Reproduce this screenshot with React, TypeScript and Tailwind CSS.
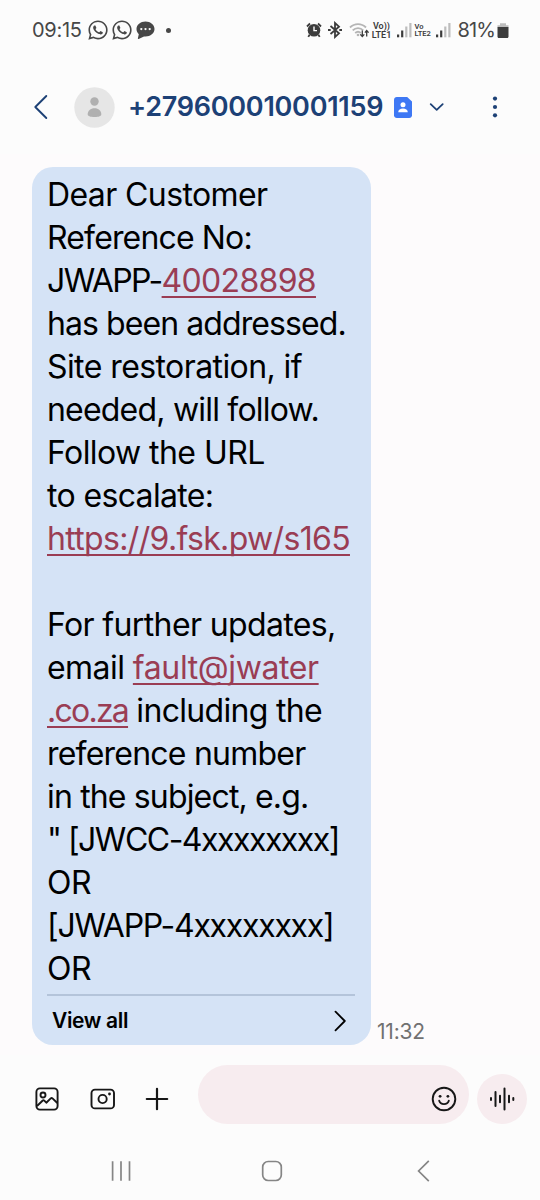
import { FaWhatsapp } from "react-icons/fa";

type Part = { text: string; link?: boolean; track: string };

const message: Part[][] = [
  [{ text: "Dear Customer", track: "tracking-[-0.6px]" }],
  [{ text: "Reference No:", track: "tracking-[-0.85px]" }],
  [
    { text: "JWAPP-", track: "tracking-[-1.6px]" },
    { text: "40028898", link: true, track: "tracking-[-0.68px]" },
  ],
  [{ text: "has been addressed.", track: "tracking-[-0.92px]" }],
  [{ text: "Site restoration, if", track: "tracking-[-0.58px]" }],
  [{ text: "needed, will follow.", track: "tracking-[-0.8px]" }],
  [{ text: "Follow the URL", track: "tracking-[-0.57px]" }],
  [{ text: "to escalate:", track: "tracking-[-0.65px]" }],
  [{ text: "https://9.fsk.pw/s165", link: true, track: "tracking-[-0.66px]" }],
  [],
  [{ text: "For further updates,", track: "tracking-[-0.63px]" }],
  [
    { text: "email ", track: "tracking-[-0.55px]" },
    { text: "fault@jwater", link: true, track: "tracking-[-0.4px]" },
  ],
  [
    { text: ".co.za", link: true, track: "tracking-[-1.75px]" },
    { text: " including the", track: "tracking-[-0.68px]" },
  ],
  [{ text: "reference number", track: "tracking-[-0.78px]" }],
  [{ text: "in the subject, e.g.", track: "tracking-[-0.84px]" }],
  [{ text: '" [JWCC-4xxxxxxxx]', track: "tracking-[-1.5px]" }],
  [{ text: "OR", track: "tracking-[-0.5px]" }],
  [{ text: "[JWAPP-4xxxxxxxx]", track: "tracking-[-1.27px]" }],
  [{ text: "OR", track: "tracking-[-0.5px]" }],
];

function Signal() {
  return (
    <svg width="15" height="16" viewBox="0 0 15 16">
      <rect x="0" y="12.5" width="2.2" height="2.8" fill="#3c3c3c" />
      <rect x="4.1" y="8.5" width="2.2" height="6.8" fill="#3c3c3c" />
      <rect x="8.2" y="4.5" width="2.2" height="10.8" fill="#bdbdbd" />
      <rect x="12.3" y="1" width="2.2" height="14.3" fill="#bdbdbd" />
    </svg>
  );
}

function StatusBar() {
  return (
    <div className="flex h-[60px] items-center pr-[31px] pl-[32px] text-[20px] text-[#474747]">
      <span className="w-[54.5px] tracking-[-0.3px]">09:15</span>
      <FaWhatsapp size={22} className="mr-[2px]" />
      <FaWhatsapp size={22} className="mr-[2px]" />
      <svg width="19" height="20" viewBox="0 0 19 20" className="ml-px">
        <path d="M9.5 1.6c5 0 9 3.3 9 7.5s-4 7.5-9 7.5c-.5 0-1 0-1.500-.1L2.600 19c-.5.2-.9-.2-.7-.7l.9-4C1.300 12.900.5 11.100.5 9.100c0-4.200 4-7.500 9-7.500z" fill="currentColor" />
        <g fill="#fcfcfc">
          <circle cx="5.3" cy="9.1" r="1.15" />
          <circle cx="9.5" cy="9.1" r="1.15" />
          <circle cx="13.7" cy="9.1" r="1.15" />
        </g>
      </svg>
      <span className="ml-[11px] size-[5px] rounded-full bg-[#474747]" />
      <div className="ml-auto flex items-center">
        <svg width="16" height="16" viewBox="0 0 16 16">
          <circle cx="8" cy="8.3" r="6.3" fill="#3c3c3c" />
          <path d="M1 4.500 4 1.500M15 4.500 12 1.500M3.600 12.800 2.300 14.900M12.400 12.800l1.300 2.100" stroke="#3c3c3c" strokeWidth="1.8" fill="none" />
          <path d="M8 4.600v4h3" stroke="#fcfcfc" strokeWidth="1.4" fill="none" />
        </svg>
        <svg width="16" height="18" viewBox="0 0 16 18" className="ml-[5px]" fill="none" stroke="#3c3c3c" strokeWidth="1.8">
          <path d="M3.500 5 12 12.300 8 16V2l4 3.700L3.500 13" />
          <path d="M1 9h2.700M12.300 9H15" strokeWidth="2.2" />
        </svg>
        <svg width="21" height="18" viewBox="0 0 21 18" className="ml-[6px]" fill="none">
          <g stroke="#b5b5b5" strokeWidth="1.8">
            <path d="M1 6.500c4.500-4.600 11.500-4.600 16 0" />
            <path d="M3.700 9.400c3-3 7.600-3 10.600 0" />
            <path d="M6.200 12c1.600-1.500 4-1.500 5.600 0" />
          </g>
          <circle cx="9" cy="14" r="1.3" fill="#b5b5b5" />
          <path d="M13.300 9.500v6M11.300 13.400l2 2.100 2-2.100M17.700 15.500v-6M15.900 11.600l1.800-2.100 1.900 2.100" stroke="#3c3c3c" strokeWidth="1.3" />
        </svg>
        <div className="ml-[2px] flex w-[20px] flex-col items-center pt-px font-['Roboto',sans-serif] text-[9px] leading-[9px] font-semibold whitespace-nowrap text-[#3c3c3c]">
          <span>Vo))</span>
          <span>LTE1</span>
        </div>
        <div className="ml-[5px]"><Signal /></div>
        <div className="ml-[3px] flex w-[17px] flex-col font-['Roboto',sans-serif] text-[7.5px] leading-[7.5px] font-semibold whitespace-nowrap text-[#3c3c3c]">
          <span>Vo</span>
          <span>LTE2</span>
        </div>
        <div className="ml-[4px]"><Signal /></div>
        <span className="ml-[7px] w-[39.5px] tracking-[-0.9px] whitespace-nowrap">81%</span>
        <svg width="12" height="17" viewBox="0 0 12 17">
          <path d="M3 1.200h6v2h2.500v2H.5v-2H3z" fill="#bdbdbd" />
          <path d="M.5 5h11v9.500c0 .8-.5 1.500-1.300 1.500H1.800C1 16 .5 15.300.5 14.500z" fill="#3c3c3c" />
        </svg>
      </div>
    </div>
  );
}

function Header() {
  return (
    <header className="flex h-[94px] items-center pl-[33px] text-[#1d4176]">
      <svg width="16" height="28" viewBox="0 0 16 28" fill="none" stroke="currentColor" strokeWidth="1.9" strokeLinecap="round" strokeLinejoin="round">
        <path d="M13.300 3 2.300 14l11 11" />
      </svg>
      <svg width="41" height="41" viewBox="0 0 41 41" className="ml-[25px]">
        <circle cx="20.5" cy="20.5" r="20.2" fill="#e6e6e6" />
        <circle cx="20.5" cy="14.5" r="4.2" fill="#b0b0b0" />
        <path d="M13.700 27.200c0-3.400 2.800-6 6.800-6s6.800 2.600 6.800 6c0 1.800-2.600 2.800-6.800 2.800s-6.800-1-6.800-2.800z" fill="#b0b0b0" />
      </svg>
      <h1 className="ml-[13px] w-[265.5px] text-[27px] font-semibold tracking-[-0.27px] whitespace-nowrap">+279600010001159</h1>
      <svg width="18" height="21" viewBox="0 0 18 21">
        <path d="M2.800 0h10.400L18 4.600v13.600c0 1.600-1.200 2.800-2.800 2.800H2.800C1.200 21 0 19.800 0 18.200V2.800C0 1.200 1.200 0 2.800 0z" fill="#3e78f4" />
        <circle cx="9" cy="7.8" r="2.5" fill="#fff" />
        <path d="M4.300 14.800c0-2 2-3.300 4.700-3.300s4.700 1.300 4.700 3.300v.5H4.300z" fill="#fff" />
      </svg>
      <svg width="16" height="12" viewBox="0 0 16 12" className="ml-[16px]" fill="none" stroke="currentColor" strokeWidth="1.8" strokeLinecap="round" strokeLinejoin="round">
        <path d="m2.700 3.200 6 5.700 6-5.700" />
      </svg>
      <svg width="6" height="22" viewBox="0 0 6 22" className="ml-[48px]" fill="currentColor">
        <circle cx="3" cy="2.6" r="2.1" />
        <circle cx="3" cy="11" r="2.1" />
        <circle cx="3" cy="19.3" r="2.1" />
      </svg>
    </header>
  );
}

function Conversation() {
  return (
    <main className="flex h-[901px] items-start bg-[#fdfbfc] pt-[13px] pl-[32px]">
      <div className="h-[878px] w-[339px] rounded-[21px] bg-[#d5e3f6] pt-[6px] pr-[16px] pl-[15px] text-black">
        <div className="text-[32px] leading-[43px]">
          {message.map((line, i) => (
            <div key={i} className="h-[43px] whitespace-pre">
              {line.map((part) => (
                <span
                  key={part.text}
                  className={`${part.track} ${part.link ? "text-[#9a3d54] underline decoration-2 underline-offset-[4px] [text-decoration-skip-ink:none]" : ""}`}
                >
                  {part.text}
                </span>
              ))}
            </div>
          ))}
        </div>
        <div className="mt-[4px] h-[2px] bg-[#b4c4da]" />
        <div className="flex h-[49px] items-center justify-between pr-[7px] pl-[5px]">
          <span className="text-[21px] font-semibold tracking-[-0.35px]">View all</span>
          <svg width="15" height="24" viewBox="0 0 15 24" fill="none" stroke="#000" strokeWidth="1.8" strokeLinecap="round" strokeLinejoin="round">
            <path d="m2.500 2.700 9.300 9.300-9.300 9.300" />
          </svg>
        </div>
      </div>
      <time className="mt-[852px] ml-[6px] text-[21px] leading-[26px] tracking-[-0.2px] text-[#717171]">11:32</time>
    </main>
  );
}

function Composer() {
  return (
    <div className="flex h-[79px] pt-[10px] pl-[34px]">
      <div className="flex h-[68px] w-[163.5px] items-center text-[#171717]">
        <svg width="26" height="26" viewBox="0 0 26 26" fill="none" stroke="currentColor" strokeWidth="1.9" strokeLinejoin="round">
          <rect x="2.4" y="2.4" width="21.2" height="21.2" rx="3.5" />
          <circle cx="9" cy="9" r="2.5" />
          <path d="m3 20 5.500-5.300c.6-.6 1.200-.6 1.800 0l2 2 4.400-4.300c.6-.5 1.200-.5 1.800 0l4.800 4.600" />
        </svg>
        <svg width="28" height="24" viewBox="0 0 28 24" className="ml-[29px]" fill="none" stroke="currentColor" strokeWidth="1.9">
          <rect x="2.5" y="2.6" width="22.5" height="18.8" rx="3.5" />
          <circle cx="13.6" cy="12" r="4.1" />
          <circle cx="20.5" cy="7" r="1.4" fill="currentColor" stroke="none" />
        </svg>
        <svg width="24" height="24" viewBox="0 0 24 24" className="ml-[28px]" fill="none" stroke="currentColor" strokeWidth="2.2" strokeLinecap="round">
          <path d="M12 1.800v20.400M1.800 12h20.400" />
        </svg>
      </div>
      <div className="flex h-[59px] w-[271.5px] justify-end rounded-full bg-[#f7ecef] pt-[21px] pr-[12px]">
        <svg width="26" height="26" viewBox="0 0 26 26" fill="none" stroke="#171717" strokeWidth="1.9" strokeLinecap="round">
          <circle cx="13" cy="13" r="11.3" />
          <path d="M8.200 14.700c.7 2.200 2.500 3.400 4.800 3.400s4.100-1.200 4.800-3.400" />
          <circle cx="9.1" cy="10.3" r="1.4" fill="#171717" stroke="none" />
          <circle cx="16.9" cy="10.3" r="1.4" fill="#171717" stroke="none" />
        </svg>
      </div>
      <div className="mt-[9px] ml-[8px] flex size-[50px] items-center justify-center rounded-full bg-[#f7ecef]">
        <svg width="26" height="26" viewBox="0 0 26 26" stroke="#171717" strokeWidth="2" strokeLinecap="round">
          <path d="M2 12v2M6.500 6v14M11 9.700v6.600M15.500 2.500v21M20 9.700v6.600M24.300 12v2" />
        </svg>
      </div>
    </div>
  );
}

function NavigationBar() {
  return (
    <nav className="flex h-[66px] items-center pt-[7px] pl-[110px] text-[#858585]">
      <svg width="22" height="24" viewBox="0 0 22 24" stroke="currentColor" strokeWidth="1.7">
        <path d="M2.600 2.300v19.400M11 2.300v19.400M19.500 2.300v19.400" />
      </svg>
      <svg width="24" height="24" viewBox="0 0 24 24" className="ml-[128px]" fill="none" stroke="currentColor" strokeWidth="1.7">
        <rect x="2.7" y="2.5" width="18.6" height="19" rx="5.5" />
      </svg>
      <svg width="15" height="26" viewBox="0 0 15 26" className="ml-[132px]" fill="none" stroke="currentColor" strokeWidth="1.7">
        <path d="M12.800 2.800 2.600 13l10.200 10.200" />
      </svg>
    </nav>
  );
}

export default function App() {
  return (
    <div className="flex h-[1200px] w-[540px] flex-col overflow-hidden bg-[#fcfcfc] font-['Inter',sans-serif]">
      <StatusBar />
      <Header />
      <Conversation />
      <Composer />
      <NavigationBar />
    </div>
  );
}
